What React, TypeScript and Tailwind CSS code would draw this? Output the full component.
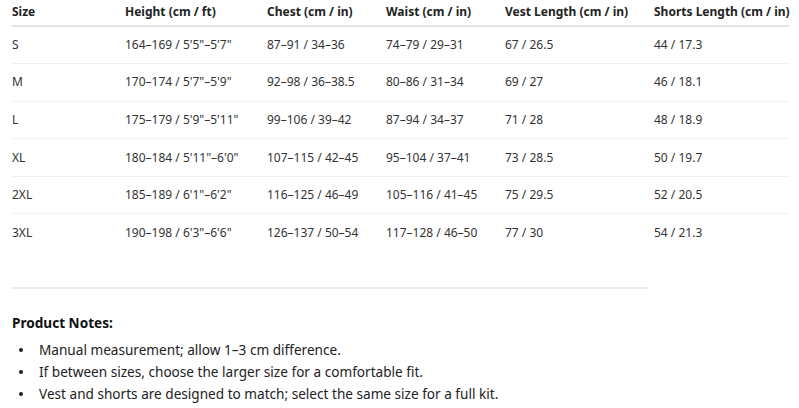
import React from 'react';

// Size chart with product notes

const rows = [
  ['S', '164–169 / 5\'5"–5\'7"', '87–91 / 34–36', '74–79 / 29–31', '67 / 26.5', '44 / 17.3'],
  ['M', '170–174 / 5\'7"–5\'9"', '92–98 / 36–38.5', '80–86 / 31–34', '69 / 27', '46 / 18.1'],
  ['L', '175–179 / 5\'9"–5\'11"', '99–106 / 39–42', '87–94 / 34–37', '71 / 28', '48 / 18.9'],
  ['XL', '180–184 / 5\'11"–6\'0"', '107–115 / 42–45', '95–104 / 37–41', '73 / 28.5', '50 / 19.7'],
  ['2XL', '185–189 / 6\'1"–6\'2"', '116–125 / 46–49', '105–116 / 41–45', '75 / 29.5', '52 / 20.5'],
  ['3XL', '190–198 / 6\'3"–6\'6"', '126–137 / 50–54', '117–128 / 46–50', '77 / 30', '54 / 21.3'],
];

const headers = ['Size', 'Height (cm / ft)', 'Chest (cm / in)', 'Waist (cm / in)', 'Vest Length (cm / in)', 'Shorts Length (cm / in)'];
const widths = ['w-[113px]', 'w-[142px]', 'w-[119px]', 'w-[119px]', 'w-[149px]', 'w-[135px]'];

const notes = [
  'Manual measurement; allow 1–3 cm difference.',
  'If between sizes, choose the larger size for a comfortable fit.',
  'Vest and shorts are designed to match; select the same size for a full kit.',
];

export default function App() {
  return (
    <div className="min-h-screen bg-white pl-3 pr-[10px] text-[#333] font-['Noto_Sans',sans-serif]">
      <table className="w-[777px] table-fixed border-collapse text-[12px]">
        <colgroup>
          {widths.map((w, i) => (
            <col key={i} className={w} />
          ))}
        </colgroup>
        <thead>
          <tr className="border-b-2 border-[#e3e3e3]">
            {headers.map((h) => (
              <th key={h} className="h-[26px] p-0 pb-[2px] text-left font-bold text-[#222] whitespace-nowrap">
                {h}
              </th>
            ))}
          </tr>
        </thead>
        <tbody>
          {rows.map((r, i) => (
            <tr key={r[0]} className={i < rows.length - 1 ? 'border-b border-[#f0f0f0]' : ''}>
              {r.map((c, j) => (
                <td key={j} className="h-[37.6px] p-0 whitespace-nowrap">
                  {c}
                </td>
              ))}
            </tr>
          ))}
        </tbody>
      </table>

      <hr className="mt-[35px] w-[637px] border-0 border-t-2 border-[#ececec]" />

      <div className="mt-[24px] text-[13.6px]">
        <div className="font-bold text-[#111] leading-[20px]">Product Notes:</div>
        <ul className="mt-[6px]">
          {notes.map((n) => (
            <li key={n} className="flex items-center leading-[22px] text-[#222]">
              <span className="ml-[7px] mr-[16px] h-[4px] w-[4px] rounded-full bg-[#222]" />
              <span>{n}</span>
            </li>
          ))}
        </ul>
      </div>
    </div>
  );
}
